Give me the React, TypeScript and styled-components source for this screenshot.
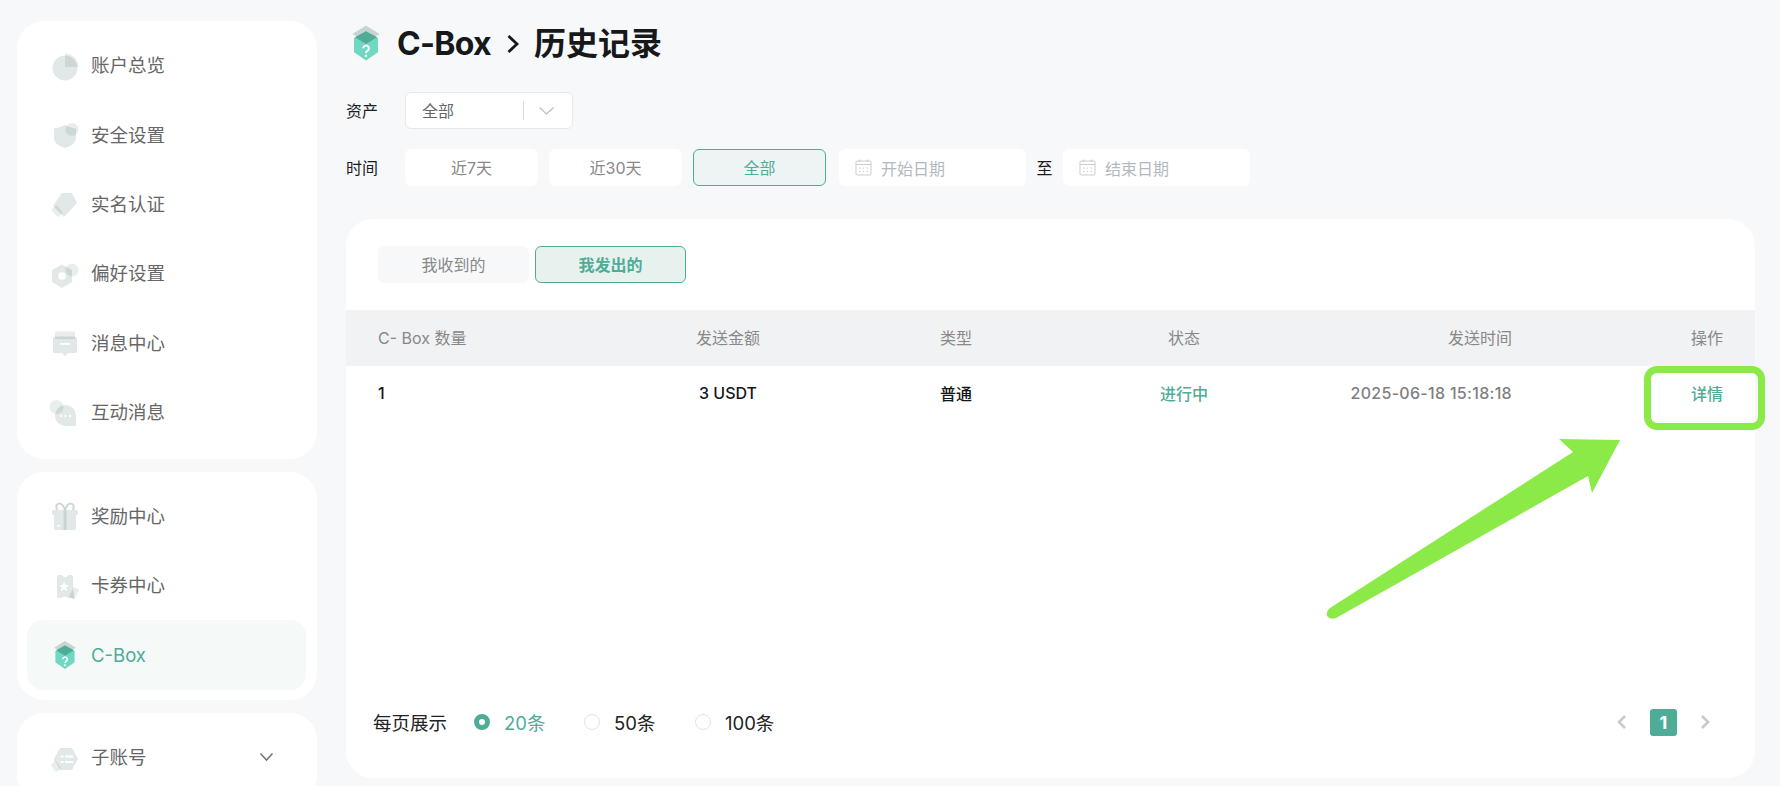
import React from "react";
import styled, { createGlobalStyle, css } from "styled-components";

const GREEN = "#4fac97";
const MARK = "#8bea47";

const Global = createGlobalStyle`
  html, body { margin: 0; padding: 0; height: 100%; overflow: hidden; background: #f7f8fa; }
  body { font-family: Inter, "Noto Sans CJK SC", sans-serif; }
  #root { height: 100%; }
  * { box-sizing: border-box; }
`;

const Page = styled.div`
  display: flex;
  height: 786px;
  overflow: hidden;
  background: #f7f8fa;
`;

const Sidebar = styled.aside`
  flex: none;
  width: 300px;
  margin: 21px 0 0 17px;
  display: flex;
  flex-direction: column;
  gap: 13px;
`;

const NavCard = styled.nav<{ $bottom?: number }>`
  flex: none;
  background: #fff;
  border-radius: 27px;
  padding: 10px 11px ${(p) => p.$bottom ?? 10}px 10px;
`;

const NavRow = styled.div<{ $active?: boolean }>`
  height: 69.3px;
  display: flex;
  align-items: center;
  gap: 10px;
  padding: 0 22px;
  font-size: 18.5px;
  line-height: 1;
  border-radius: 16px;
  color: ${(p) => (p.$active ? GREEN : "#666")};
  background: ${(p) => (p.$active ? "#f5f9f8" : "transparent")};
`;

const NavLabel = styled.span`
  flex: 1;
`;

const NavCaret = styled.svg`
  flex: none;
  margin-right: 10px;
`;

const Ico = styled.svg`
  flex: none;
  display: block;
  isolation: isolate;
  .b { fill: #e1e8e7; }
  .o { fill: #e9eeed; mix-blend-mode: multiply; }
  .d { fill: #cbd4d2; }
  .w { fill: #fff; }
`;

const Main = styled.main`
  flex: none;
  width: 1409px;
  margin-left: 29px;
  display: flex;
  flex-direction: column;
`;

const TitleRow = styled.h1`
  margin: 23px 0 0;
  height: 40px;
  display: flex;
  align-items: center;
  gap: 11px;
  font-size: 32px;
  line-height: 40px;
  font-weight: 700;
  color: #17181a;
`;

const TitleSep = styled.svg`
  flex: none;
  margin: 0 14px 0 15px;
`;

const TitleText = styled.span`
  display: flex;
  align-items: center;
  padding-top: 1px;
`;

const TitleLatin = styled.span`
  letter-spacing: -0.7px;
`;

const FilterRow = styled.div<{ $top: number }>`
  margin-top: ${(p) => p.$top}px;
  height: 37px;
  display: flex;
  align-items: center;
  font-size: 16px;
  color: #1c1d1f;
`;

const FilterLabel = styled.span`
  width: 59px;
  padding-bottom: 2px;
`;

const Select = styled.div`
  width: 168px;
  height: 37px;
  display: flex;
  align-items: center;
  padding-left: 16px;
  background: #fff;
  border: 1px solid #e6e7e9;
  border-radius: 6px;
  color: #666;
`;

const SelectValue = styled.span`
  width: 101px;
  padding-bottom: 1px;
`;

const SelectBar = styled.span`
  width: 1px;
  height: 19px;
  background: #dedfe1;
  margin-right: 15px;
`;

const RangeBtn = styled.div<{ $active?: boolean }>`
  width: 133px;
  height: 37px;
  margin-right: ${(p) => (p.$active ? 13 : 11)}px;
  padding-bottom: 2px;
  display: flex;
  align-items: center;
  justify-content: center;
  border-radius: 6px;
  background: ${(p) => (p.$active ? "#eef4f4" : "#fff")};
  border: 1px solid ${(p) => (p.$active ? GREEN : "#fff")};
  color: ${(p) => (p.$active ? GREEN : "#888")};
`;

const DateField = styled.div`
  width: 187px;
  height: 37px;
  display: flex;
  align-items: center;
  gap: 9px;
  padding-left: 16px;
  border-radius: 6px;
  background: #fff;
  color: #b4b8bd;
`;

const DateSep = styled.span`
  width: 37px;
  text-align: center;
  padding-bottom: 2px;
`;

const Card = styled.section`
  position: relative;
  margin-top: 33px;
  height: 559px;
  background: #fff;
  border-radius: 27px;
  display: flex;
  flex-direction: column;
`;

const Tabs = styled.div`
  display: flex;
  gap: 6px;
  padding: 27px 0 0 32px;
`;

const Tab = styled.div<{ $active?: boolean }>`
  width: 151px;
  height: 37px;
  padding-bottom: 2px;
  display: flex;
  align-items: center;
  justify-content: center;
  font-size: 16px;
  border-radius: 6px;
  font-weight: ${(p) => (p.$active ? 600 : 400)};
  background: ${(p) => (p.$active ? "#e7f2ef" : "#f7f8fa")};
  border: 1px solid ${(p) => (p.$active ? GREEN : "#f7f8fa")};
  color: ${(p) => (p.$active ? GREEN : "#888")};
`;

const rowGrid = css`
  display: grid;
  grid-template-columns: 318px 244px 180px 128px 264px 211px;
  align-items: center;
  padding: 0 32px 2px;
  font-size: 16px;
`;

const HeadRow = styled.div`
  ${rowGrid}
  margin-top: 27px;
  height: 56px;
  background: #f1f2f4;
  color: #888;
`;

const DataRow = styled.div`
  ${rowGrid}
  height: 56px;
  font-weight: 500;
  color: #141517;
`;

const Cell = styled.div<{ $align?: string; $tone?: string; $track?: number }>`
  text-align: ${(p) => p.$align ?? "left"};
  color: ${(p) => p.$tone ?? "inherit"};
  letter-spacing: ${(p) => p.$track ?? 0}px;
  white-space: nowrap;
`;

const AmountCell = styled.div`
  width: 64px;
  text-align: center;
  white-space: nowrap;
`;

const Footer = styled.div`
  margin-top: auto;
  height: 40px;
  margin-bottom: 36px;
  padding: 0 44px 0 27px;
  display: flex;
  align-items: center;
  font-size: 18.5px;
  color: #222;
`;

const PerPage = styled.span`
  width: 101px;
`;

const RadioItem = styled.div<{ $width: number; $active?: boolean }>`
  width: ${(p) => p.$width}px;
  display: flex;
  align-items: center;
  gap: 14px;
  color: ${(p) => (p.$active ? GREEN : "#222")};
`;

const RadioDot = styled.span<{ $active?: boolean }>`
  width: 16px;
  height: 16px;
  border-radius: 50%;
  background: #fff;
  border: ${(p) => (p.$active ? `5px solid ${GREEN}` : "1px solid #e3e4e6")};
`;

const Pager = styled.div`
  margin-left: auto;
  display: flex;
  align-items: center;
  gap: 22px;
`;

const PageNum = styled.div`
  width: 27px;
  height: 27px;
  border-radius: 3px;
  background: ${GREEN};
  color: #fff;
  font-size: 18px;
  font-weight: 700;
  display: flex;
  align-items: center;
  justify-content: center;
`;

const Highlight = styled.div`
  position: absolute;
  left: 1298px;
  top: 147px;
  width: 121px;
  height: 64px;
  border: 7px solid ${MARK};
  border-radius: 13px;
  pointer-events: none;
`;

const Arrow = styled.svg`
  position: absolute;
  left: 974px;
  top: 211px;
  pointer-events: none;
`;

const Svg32 = ({ children, size = 32 }: { children: React.ReactNode; size?: number }) => (
  <Ico width={size} height={size} viewBox="0 0 32 32">
    {children}
  </Ico>
);

const icons: Record<string, React.ReactNode> = {
  pie: (
    <>
      <circle className="b" cx="16" cy="18" r="12.5" />
      <path className="o" d="M16 3.5a13.5 13.5 0 0 1 13.5 13.5H16z" />
    </>
  ),
  shield: (
    <>
      <path className="b" d="M5 9.5Q11 9 16 6Q21 9 27 9.5V19Q27 26 16 29Q5 26 5 19Z" />
      <circle className="o" cx="23" cy="10.5" r="6.5" />
    </>
  ),
  tag: (
    <>
      <path className="b" d="M13 5H23L28 15L16 28Q15 29 14 28L4 18Z" />
      <path className="o" d="M2 22L8 17L14 25L10 28.5Q9 29 8 28.5Z" />
    </>
  ),
  gear: (
    <>
      <path className="b" d="M13 6.5L23 12V24L13 30L3 24V12Z" />
      <circle className="o" cx="23" cy="12" r="6.5" />
      <circle className="w" cx="13" cy="18" r="3.8" />
    </>
  ),
  inbox: (
    <>
      <rect className="b" x="6" y="4.5" width="20" height="6" rx="1" opacity=".75" />
      <rect className="b" x="4" y="10" width="24" height="16" rx="1.5" />
      <path className="b" d="M13 26H19L16 29Z" />
      <rect className="d" x="6" y="9.5" width="20" height="2.6" />
      <rect className="w" x="11" y="16" width="10" height="1.8" />
    </>
  ),
  chat: (
    <>
      <path className="b" d="M16.5 9a10.5 10.5 0 0 1 10.5 10.5V30H16.5a10.5 10.5 0 0 1 0-21Z" />
      <circle className="o" cx="7.5" cy="11" r="7" />
      <circle className="w" cx="12" cy="20" r="1.2" />
      <circle className="w" cx="16.5" cy="20" r="1.2" />
      <circle className="w" cx="21" cy="20" r="1.2" />
    </>
  ),
  gift: (
    <>
      <path d="M16 10C13 1 5 2 8 10M16 10C19 1 27 2 24 10" fill="none" stroke="#cdd6d4" strokeWidth="2" />
      <rect className="b" x="5" y="14" width="22" height="16" rx="2" />
      <rect className="b" x="3" y="10" width="26" height="5" rx="1.5" />
      <rect className="d" x="14.5" y="10" width="3" height="20" />
      <rect className="w" x="8" y="25" width="3" height="1.6" />
    </>
  ),
  ticket: (
    <>
      <path className="o" d="M22 16L30 19.5L25.5 29L19 27Z" />
      <path className="b" d="M8 6.5Q8 5 9.5 5H12.5Q13.5 7 16 7Q18.5 7 19.5 5H22.5Q24 5 24 6.5V26.5Q24 28 22.5 28H19.5Q18.5 26.5 16 26.5Q13.5 26.5 12.5 28H9.5Q8 28 8 26.5Z" />
      <path className="d" d="M24 18.5L25.5 29L20 27Z" />
      <path className="w" d="M15 11.5L16.5 15L20 15.3L17.4 17.7L18.2 21.2L15 19.4L11.8 21.2L12.6 17.7L10 15.3L13.5 15Z" />
    </>
  ),
  sub: (
    <>
      <path className="b" d="M11 7H23L29 18L23 29H11L5 18Z" />
      <path className="o" d="M2 24L6 19L12 27L8 30.5Q6 30.5 5 29.5Z" />
      <rect className="w" x="11.5" y="14.5" width="3" height="2" />
      <rect className="w" x="16" y="14.5" width="8" height="2" />
      <rect className="w" x="11.5" y="20" width="3" height="2" />
      <rect className="w" x="16" y="20" width="8" height="2" />
    </>
  ),
};

const CBoxIcon = ({ size = 32 }: { size?: number }) => (
  <Svg32 size={size}>
    <polygon points="16,2 27,8.7 16,15 5.1,8.7" fill="#c9d3d1" />
    <polygon points="16,6.5 25.6,12 25.6,23.3 16,30 6.4,23.3 6.4,12" fill="#70d8c2" />
    <polygon points="16,6.5 24.8,11.3 16,16.7 7.2,11.3" fill="#4fac97" />
    <path d="M13.9 20.2a2.2 2.2 0 1 1 3.4 1.9c-.8.5-1.3 1-1.3 1.9" fill="none" stroke="#fff" strokeWidth="1.6" />
    <circle cx="16" cy="26.2" r="1" fill="#fff" />
  </Svg32>
);

const CalendarIcon = () => (
  <svg width="17" height="17" viewBox="0 0 17 17" fill="none" stroke="#c9cdd1" strokeWidth="1">
    <rect x="1" y="2" width="15" height="14" rx="1" />
    <path d="M1 5.5H16M4.5 .5V3M12.5 .5V3" />
    <path d="M4 9H5.5M7.8 9H9.2M11.5 9H13M4 12.5H5.5M7.8 12.5H9.2M11.5 12.5H13" />
  </svg>
);

const Chev = ({ dir, color, w = 2.6 }: { dir: "l" | "r"; color: string; w?: number }) => (
  <svg width="12" height="16" viewBox="0 0 12 16" fill="none" stroke={color} strokeWidth={w}>
    <path d={dir === "l" ? "M9 2L3 8L9 14" : "M3 2L9 8L3 14"} />
  </svg>
);

const NAV1 = [
  ["账户总览", "pie"],
  ["安全设置", "shield"],
  ["实名认证", "tag"],
  ["偏好设置", "gear"],
  ["消息中心", "inbox"],
  ["互动消息", "chat"],
];

export default function App() {
  return (
    <Page>
      <Global />
      <Sidebar>
        <NavCard $bottom={12}>
          {NAV1.map(([label, icon]) => (
            <NavRow key={label}>
              <Svg32>{icons[icon]}</Svg32>
              <NavLabel>{label}</NavLabel>
            </NavRow>
          ))}
        </NavCard>
        <NavCard>
          <NavRow>
            <Svg32>{icons.gift}</Svg32>
            <NavLabel>奖励中心</NavLabel>
          </NavRow>
          <NavRow>
            <Svg32>{icons.ticket}</Svg32>
            <NavLabel>卡券中心</NavLabel>
          </NavRow>
          <NavRow $active>
            <CBoxIcon />
            <NavLabel>C-Box</NavLabel>
          </NavRow>
        </NavCard>
        <NavCard>
          <NavRow>
            <Svg32>{icons.sub}</Svg32>
            <NavLabel>子账号</NavLabel>
            <NavCaret width="15" height="10" viewBox="0 0 15 10" fill="none" stroke="#777" strokeWidth="1.6">
              <path d="M1.5 1.5L7.5 8L13.5 1.5" />
            </NavCaret>
          </NavRow>
        </NavCard>
      </Sidebar>

      <Main>
        <TitleRow>
          <CBoxIcon size={40} />
          <TitleText>
            <TitleLatin>C-Box</TitleLatin>
            <TitleSep width="14" height="20" viewBox="0 0 14 20" fill="none" stroke="#17181a" strokeWidth="2.8">
              <path d="M2.5 2L11 10L2.5 18" />
            </TitleSep>
            历史记录
          </TitleText>
        </TitleRow>

        <FilterRow $top={29}>
          <FilterLabel>资产</FilterLabel>
          <Select>
            <SelectValue>全部</SelectValue>
            <SelectBar />
            <svg width="15" height="8" viewBox="0 0 15 8" fill="none" stroke="#b9bcc0" strokeWidth="1.1">
              <path d="M.5 .5L7.5 7L14.5 .5" />
            </svg>
          </Select>
        </FilterRow>

        <FilterRow $top={20}>
          <FilterLabel>时间</FilterLabel>
          <RangeBtn>近7天</RangeBtn>
          <RangeBtn>近30天</RangeBtn>
          <RangeBtn $active>全部</RangeBtn>
          <DateField>
            <CalendarIcon />
            开始日期
          </DateField>
          <DateSep>至</DateSep>
          <DateField>
            <CalendarIcon />
            结束日期
          </DateField>
        </FilterRow>

        <Card>
          <Tabs>
            <Tab>我收到的</Tab>
            <Tab $active>我发出的</Tab>
          </Tabs>

          <HeadRow>
            <Cell>C- Box 数量</Cell>
            <Cell>发送金额</Cell>
            <Cell>类型</Cell>
            <Cell $align="center">状态</Cell>
            <Cell $align="right">发送时间</Cell>
            <Cell $align="right">操作</Cell>
          </HeadRow>
          <DataRow>
            <Cell>1</Cell>
            <AmountCell>3 USDT</AmountCell>
            <Cell>普通</Cell>
            <Cell $align="center" $tone={GREEN}>进行中</Cell>
            <Cell $align="right" $tone="#808080" $track={0.3}>2025-06-18 15:18:18</Cell>
            <Cell $align="right" $tone={GREEN}>详情</Cell>
          </DataRow>

          <Footer>
            <PerPage>每页展示</PerPage>
            <RadioItem $width={110} $active>
              <RadioDot $active />
              20条
            </RadioItem>
            <RadioItem $width={111}>
              <RadioDot />
              50条
            </RadioItem>
            <RadioItem $width={100}>
              <RadioDot />
              100条
            </RadioItem>
            <Pager>
              <Chev dir="l" color="#c8c9d3" />
              <PageNum>1</PageNum>
              <Chev dir="r" color="#c8c9d3" />
            </Pager>
          </Footer>

          <Highlight />
          <Arrow width="310" height="195" viewBox="0 0 310 195">
            <path
              d="M253 22L239 9L300 10L272 63L268 46L16 188Q10 190 7 186Q6 181 10 178Z"
              fill={MARK}
            />
          </Arrow>
        </Card>
      </Main>
    </Page>
  );
}
